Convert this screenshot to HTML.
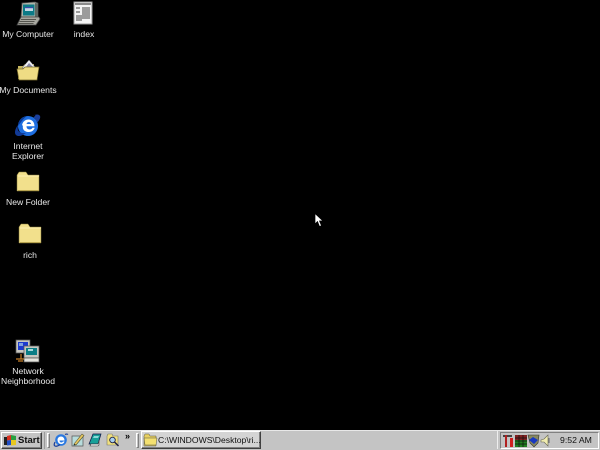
<!DOCTYPE html>
<html>
<head>
<meta charset="utf-8">
<style>
html,body{margin:0;padding:0;width:600px;height:450px;overflow:hidden;background:#000;}
body{position:relative;font-family:"Liberation Sans",sans-serif;}
.t{position:absolute;color:#e8e8e8;font-size:8.6px;line-height:10px;text-align:center;white-space:nowrap;transform:translateX(-50%);filter:blur(.25px);}
svg{position:absolute;overflow:visible;filter:blur(.35px);}
#bar{position:absolute;left:0;top:430px;width:600px;height:20px;background:#c4c4c4;border-top:1px solid #e8e8e8;box-sizing:border-box;}
.abs{position:absolute;box-sizing:border-box;}
.raised{border:1px solid;border-color:#fff #404040 #404040 #fff;box-shadow:inset -1px -1px 0 #808080;}
.bt{filter:blur(.25px);}
</style>
</head>
<body>

<!-- My Computer -->
<svg style="left:16px;top:1px" width="25" height="25" viewBox="0 0 25 25">
<path d="M6 2l13-1 3 1v14H5z" fill="#b0b4a8" stroke="#4a4a4a" stroke-width=".8"/>
<path d="M7 3.500h11.500v11H7z" fill="#0c7a86"/>
<path d="M9 6h8v4H9z" fill="#c4d8e4"/>
<path d="M9 6h8v1.200H9z" fill="#3a4aa8"/>
<path d="M19 2l3 .5V16h-3z" fill="#5e6660"/>
<path d="M5 16h18l1 2-4 6H1z" fill="#a8a8a0" stroke="#444" stroke-width=".8"/>
<path d="M5 18.500h15M3.500 20.500h15M2.500 22.500h15" stroke="#55554f" stroke-width="1"/>
</svg>
<div class="t" style="left:28px;top:29px">My Computer</div>

<!-- index -->
<svg style="left:73px;top:1px" width="20" height="24" viewBox="0 0 20 24">
<path d="M1 1h18v22H1z" fill="#f4f4f4" stroke="#999" stroke-width="1"/>
<path d="M3 2v2M5 2v2M7 2v2M9 2v2M11 2v2M13 2v2M15 2v2M17 2v2" stroke="#222" stroke-width="1"/>
<path d="M3 7h4M9 7h8M9 9h8M3 11h4M9 11h8M9 13h8M3 15h14M3 17h14M3 19h6" stroke="#444" stroke-width="1"/>
</svg>
<div class="t" style="left:84px;top:29px">index</div>

<!-- My Documents -->
<svg style="left:16px;top:59px" width="24" height="22" viewBox="0 0 24 22">
<path d="M2 7h5l2-2h9v15H2z" fill="#c8b860"/>
<path d="M6 9l7-8 7 8z" fill="#f0f0f6" stroke="#666" stroke-width=".5"/>
<path d="M10 8l3-4 4 4z" fill="#8a8aa8"/>
<path d="M1 10h6l2-2h14l-2 13H3z" fill="#efdc84" stroke="#7a6c2c" stroke-width=".7"/>
</svg>
<div class="t" style="left:28px;top:85px">My Documents</div>

<!-- Internet Explorer -->
<svg style="left:15px;top:113px" width="26" height="26" viewBox="0 0 26 26">
<circle cx="13" cy="13" r="10" fill="#1e6ee0"/>
<path d="M3 13a10 10 0 0 1 8-9.500l-3 3z" fill="#0a3a9a"/>
<path d="M7 12.500c.5-3.800 3.300-6 6.500-6 3.800 0 6 2.700 6 6.800H11.500c0 2.300 1.500 3.200 3 3.200s2.500-.7 3-1.700h2.200c-.8 2.700-2.900 4.200-5.700 4.200-4.300 0-7-2.500-6-6.500z" fill="#fff"/>
<path d="M11.500 11h4.500c0-1.200-.9-1.900-2.200-1.900s-2 .8-2.300 1.900z" fill="#1e6ee0"/>
<path d="M17 3c4-2 7-2 8 0 .8 1.600-.5 4-3 7-.3-2-1.500-4.500-3.500-5.500 1-1 1.800-1.800 2-2.500-.8-.2-2 0-3.500 1z" fill="#1a3f9c"/>
<path d="M3 12C0 16-1 20 1 22c2 2 6 1 10-2-3 .5-6 0-7.500-2C2.500 16.500 2.500 14.500 3 12z" fill="#123a96"/>
</svg>
<div class="t" style="left:28px;top:141px">Internet<br>Explorer</div>

<!-- New Folder -->
<svg style="left:16px;top:171px" width="24" height="21" viewBox="0 0 24 21">
<path d="M1 4l2-3h7l2 3h11v16H1z" fill="#f2e08c" stroke="#8a7c38" stroke-width=".5"/>
<path d="M2 5h21" stroke="#fff0b4" stroke-width="1"/>
<path d="M2 19.500h21" stroke="#b8a450" stroke-width="1"/>
</svg>
<div class="t" style="left:28px;top:197px">New Folder</div>

<!-- rich -->
<svg style="left:18px;top:223px" width="24" height="21" viewBox="0 0 24 21">
<path d="M1 4l2-3h7l2 3h11v16H1z" fill="#f2e08c" stroke="#8a7c38" stroke-width=".5"/>
<path d="M2 5h21" stroke="#fff0b4" stroke-width="1"/>
<path d="M2 19.500h21" stroke="#b8a450" stroke-width="1"/>
</svg>
<div class="t" style="left:30px;top:250px">rich</div>

<!-- Network Neighborhood -->
<svg style="left:15px;top:339px" width="25" height="24" viewBox="0 0 25 24">
<path d="M1 1h14v13H1z" fill="#c6c6c0" stroke="#555" stroke-width=".7"/>
<path d="M3 3h10v8H3z" fill="#1c3ad0"/>
<path d="M4 4h4v3H4z" fill="#7fa0e0"/>
<path d="M9 7h15v12H9z" fill="#c6c6c0" stroke="#555" stroke-width=".7"/>
<path d="M11 9h11v7H11z" fill="#0a7d86"/>
<path d="M13 10h5v2h-5z" fill="#a8d8dc"/>
<path d="M9 19h15v4H9z" fill="#e4e4de" stroke="#555" stroke-width=".7"/>
<path d="M1 20h8M6 15v5M3 22h5" stroke="#c88028" stroke-width="1.200"/>
</svg>
<div class="t" style="left:28px;top:366px">Network<br>Neighborhood</div>

<!-- Cursor -->
<svg style="left:314px;top:213px;filter:none" width="10" height="15" viewBox="0 0 10 15">
<path d="M1 .5V11l2.500-2.500L5.500 13.500l2-.8L5.500 8H9z" fill="#fff" stroke="#000" stroke-width=".7"/>
</svg>

<!-- Taskbar -->
<div id="bar"></div>

<!-- Start button -->
<div class="abs raised" style="left:1px;top:432px;width:41px;height:17px;background:#c4c4c4"></div>
<svg style="left:4px;top:434px" width="13" height="13" viewBox="0 0 13 13">
<path d="M0 3h3v8H0z" fill="#222"/>
<path d="M3 2l4-1v5l-4 .5z" fill="#d83020"/>
<path d="M7 1l5 1v4l-5 0z" fill="#28a040"/>
<path d="M3 6.500l4-.5v5l-4 .5z" fill="#2050c8"/>
<path d="M7 6l5 0v5l-5 .5z" fill="#e8c820"/>
</svg>
<div class="abs bt" style="left:18px;top:435px;font-size:9.500px;line-height:11px;font-weight:bold;color:#111">Start</div>

<!-- Separators -->
<div class="abs" style="left:44px;top:432px;width:1px;height:17px;background:#9a9a9a"></div>
<div class="abs" style="left:47px;top:433px;width:3px;height:15px;border:1px solid;border-color:#fff #808080 #808080 #fff"></div>
<div class="abs" style="left:136px;top:433px;width:3px;height:15px;border:1px solid;border-color:#fff #808080 #808080 #fff"></div>

<!-- Quick launch icons -->
<svg style="left:54px;top:433px" width="14" height="14" viewBox="0 0 14 14">
<circle cx="7" cy="7" r="5.800" fill="#2a78e0"/>
<path d="M3.500 7c0-2 1.500-3.500 3.500-3.500S10.500 5 10.500 7.500h-5c0 1.500 1 2 1.800 2s1.400-.4 1.700-1h1.500c-.5 1.700-1.700 2.500-3.300 2.500-2.300 0-3.700-1.700-3.700-4.500z" fill="#fff"/>
<path d="M11 1.500c1.500-.7 2.500-.5 2.800.2M1 9c-1 2-1 3.500 0 4 1 .5 3 0 5-1.500" stroke="#1a3f9c" fill="none" stroke-width="1.200"/>
</svg>
<svg style="left:71px;top:433px" width="14" height="14" viewBox="0 0 14 14">
<path d="M1 3h11v10H1z" fill="#b8dcdc" stroke="#555" stroke-width=".7"/>
<path d="M3 11l8-10 2 1.500-8 9.500z" fill="#e8c860" stroke="#553" stroke-width=".6"/>
<path d="M3 11l-.5 1.500L5 12z" fill="#222"/>
</svg>
<svg style="left:88px;top:433px" width="14" height="14" viewBox="0 0 14 14">
<path d="M5 1h8l-3 10H1z" fill="#18a098" stroke="#114" stroke-width=".7"/>
<path d="M3 11h7l1-3v4l-1 1H2z" fill="#e4e4e4" stroke="#444" stroke-width=".6"/>
<path d="M6 3h5l-1 2H5z" fill="#88d8d8"/>
</svg>
<svg style="left:106px;top:433px" width="14" height="14" viewBox="0 0 14 14">
<path d="M1 3l1-2h4l1 2h5v9H1z" fill="#f0e080" stroke="#776" stroke-width=".6"/>
<circle cx="6.500" cy="7" r="2.800" fill="#a8d0f0" stroke="#224" stroke-width=".9"/>
<path d="M8.500 9l4 4" stroke="#224" stroke-width="1.500"/>
</svg>
<div class="abs bt" style="left:125px;top:431px;font-size:9px;line-height:10px;font-weight:bold;color:#000">»</div>

<!-- Task button -->
<div class="abs raised" style="left:141px;top:431px;width:120px;height:18px;background:#d4d4d4"></div>
<svg style="left:144px;top:434px" width="13" height="12" viewBox="0 0 13 12">
<path d="M0 2l1-2h4l1 2h6v10H0z" fill="#e8d060" stroke="#554" stroke-width=".5"/>
<path d="M0 4h13l-1 7H1z" fill="#f4e070" stroke="#554" stroke-width=".5"/>
</svg>
<div class="abs bt" style="left:158px;top:435px;font-size:8.600px;line-height:11px;color:#111;white-space:nowrap">C:\WINDOWS\Desktop\ri...</div>

<!-- Tray -->
<div class="abs" style="left:497px;top:431px;width:1px;height:18px;background:#eee;"></div>
<div class="abs" style="left:500px;top:432px;width:99px;height:17px;border:1px solid;border-color:#808080 #fff #fff #808080"></div>
<svg style="left:502px;top:433px" width="50" height="15" viewBox="0 0 50 15">
<path d="M1 2h9v2H1z" fill="#444"/>
<path d="M3 2h2v12H3z" fill="#b02020"/>
<path d="M8 5h3v9H8z" fill="#d02020"/>
<path d="M13 2h12v12H13z" fill="#208020"/>
<path d="M13 2h12v5H13z" fill="#802020"/>
<path d="M13 5h12M13 8h12M13 11h12M17 2v12M21 2v12" stroke="#111" stroke-width=".7"/>
<path d="M26 2h11l-1 8-4 4-4-4z" fill="#888860" stroke="#333" stroke-width=".6"/>
<path d="M27 7l4-3 5 3-4 4z" fill="#1838c0"/>
<path d="M39 7l3-1 4-4v11l-4-4h-3z" fill="#f0ecb0" stroke="#665" stroke-width=".6"/>
<path d="M47 5v5" stroke="#666" stroke-width="1"/>
</svg>
<div class="abs bt" style="left:560px;top:435px;font-size:8.700px;line-height:11px;color:#111;white-space:nowrap">9:52 AM</div>

</body>
</html>
